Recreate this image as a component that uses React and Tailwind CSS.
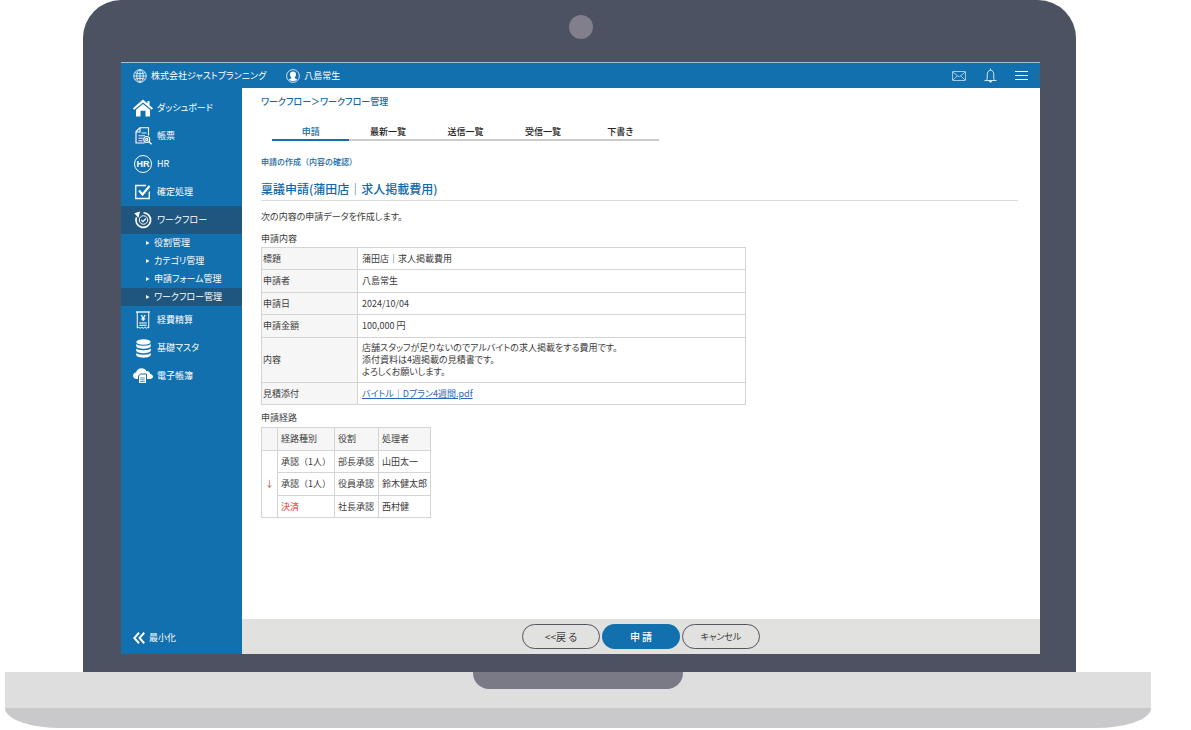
const GlobeIcon = () => (
    <svg viewBox="0 0 28 28" className="w-3.5 h-3.5" fill="none" stroke="currentColor" strokeWidth="1.6">
        <circle cx="14" cy="14" r="12.5" />
        <ellipse cx="14" cy="14" rx="6.5" ry="12.5" />
        <path d="M14 1.5v25M1.5 14h25M4 7.5c5 2.6 15 2.6 20 0M4 20.5c5-2.6 15-2.6 20 0" />
    </svg>
);

const UserIcon = () => (
    <svg viewBox="0 0 28 28" className="w-3.5 h-3.5">
        <circle cx="14" cy="14" r="12.8" fill="none" stroke="currentColor" strokeWidth="1.6" />
        <path fill="currentColor" d="M14 5c3.800 0 6 2.600 6 6 0 2.400-1 4.600-2.600 5.800v1.600l5 2.200c-2 2.600-4.800 4-8.400 4s-6.400-1.400-8.400-4l5-2.200v-1.600C9 15.600 8 13.400 8 11c0-3.400 2.200-6 6-6z" />
    </svg>
);

const MailIcon = () => (
    <svg viewBox="0 0 28 20" className="w-3.5 h-2.5" fill="none" stroke="currentColor" strokeWidth="1.5">
        <rect x="1" y="1" width="26" height="18" rx="1" />
        <path d="M1.500 2l10.500 8.500c1.200 1 2.800 1 4 0L26.500 2M2 18l8.500-8.500M26 18l-8.500-8.500" />
    </svg>
);

const BellIcon = () => (
    <svg viewBox="0 0 26 30" className="w-[13px] h-[15px]" fill="none" stroke="currentColor" strokeWidth="2">
        <path d="M1 25h24M4.500 25c1.700-2 2-4 2-7v-5c0-5 2.500-8.500 6.500-8.500s6.500 3.500 6.500 8.500v5c0 3 .3 5 2 7M13 1v3.500" />
        <path fill="currentColor" d="M11 26.500h4c0 1.200-.8 2-2 2s-2-.8-2-2z" />
    </svg>
);

const MenuIcon = () => (
    <svg viewBox="0 0 26 22" className="w-[13px] h-[11px]" stroke="currentColor" strokeWidth="2">
        <path d="M0 3h26M0 11h26M0 19h26" />
    </svg>
);

const HomeIcon = () => (
    <svg viewBox="0 0 40 36" className="w-5 h-[18px]" fill="currentColor">
        <path d="M20 1L0 18.500l2.500 3L20 7l17.500 14.500 2.500-3-7-6V4h-4v5z" />
        <path d="M6 21.500L20 10l14 11.500V35h-9V23.500H15V35H6z" />
    </svg>
);

const ReportIcon = () => (
    <svg viewBox="0 0 34 36" className="w-[17px] h-[18px]" fill="none" stroke="currentColor" strokeWidth="2.200">
        <path d="M19 32H2V9l7.500-7.500H27V17M2.500 10H10V2" />
        <path d="M13 12h10M7 17.500h13M7 22.500h9M7 27.500h8" strokeWidth="1.800" />
        <circle cx="23.500" cy="25" r="6" />
        <circle cx="23.500" cy="25" r="2.200" />
        <path d="M28 29.500l5 5" strokeWidth="2.800" />
    </svg>
);

const HrIcon = () => (
    <span className="w-[18px] h-[18px] flex items-center justify-center rounded-full border border-current text-[9px] font-bold font-['Liberation_Sans',sans-serif]">
        HR
    </span>
);

const CheckIcon = () => (
    <svg viewBox="0 0 32 32" className="w-4 h-4" fill="none" stroke="currentColor">
        <path d="M28.500 15v14h-27v-26H22" strokeWidth="2.600" />
        <path d="M8 13l7 8L29 4" strokeWidth="4.400" />
    </svg>
);

const FlowIcon = () => (
    <svg viewBox="0 0 36 36" className="w-[18px] h-[18px]" fill="none" stroke="currentColor">
        <path d="M19 3.500A14.700 14.700 0 1 1 5 12.500" strokeWidth="3.400" />
        <path d="M14 1L2.500 4.500l8.500 9z" fill="currentColor" stroke="none" transform="translate(-2 0)" />
        <circle cx="19" cy="18" r="8.500" strokeWidth="2" />
        <path d="M14.500 18l3.500 3.500 6-6.500" strokeWidth="2.400" />
    </svg>
);

const ReceiptIcon = () => (
    <svg viewBox="0 0 28 38" className="w-3.5 h-[19px]" fill="none" stroke="currentColor" strokeWidth="2">
        <path d="M0 2h28" strokeWidth="2.600" />
        <path d="M2.500 2v32l3-1.500 3 2 3-2 3 2 3-2 3 2 3-2 2 1.500V2" />
        <text x="14" y="19" textAnchor="middle" fontSize="17" fontWeight="700" fontFamily="Liberation Sans, sans-serif" fill="currentColor" stroke="none">¥</text>
        <path d="M6.500 24h15M6.500 28.500h15" />
    </svg>
);

const DatabaseIcon = () => (
    <svg viewBox="0 0 30 38" className="w-[15px] h-[19px]" fill="currentColor">
        <ellipse cx="15" cy="6" rx="14.500" ry="5.500" />
        <path d="M.5 9.500c2 5.300 27 5.300 29 0v5c-1 6.500-28 6.500-29 0z" />
        <path d="M.5 18.500c2 5.300 27 5.300 29 0v5c-1 6.500-28 6.500-29 0z" />
        <path d="M.5 27.500c2 5.300 27 5.300 29 0v4.500c-1 7-28 7-29 0z" />
    </svg>
);

const CloudIcon = () => (
    <svg viewBox="0 0 40 32" className="w-5 h-4">
        <path fill="currentColor" d="M8.500 22C3.500 22 0 19.500 0 15.500c0-3.500 2.500-6 6-6.500C7.500 4 11.500.5 17 .5c4.500 0 8 2 9.500 5.500 4.500 0 7.500 2.500 8 6 3.200.5 5.500 2.600 5.500 5.200 0 3-2.500 4.800-6.500 4.800z" />
        <path d="M11 16l4-4h12v19H11z" fill="currentColor" stroke="#1370ae" strokeWidth="2" />
        <path d="M14.500 20h9M14.500 23.500h9M14.500 27h9" stroke="#1370ae" strokeWidth="1.400" />
    </svg>
);

const CollapseIcon = () => (
    <svg viewBox="0 0 24 24" className="w-3 h-3" fill="none" stroke="currentColor" strokeWidth="3.800">
        <path d="M12 1.500L2.500 12l9.500 10.500M22.500 1.500L13 12l9.500 10.500" />
    </svg>
);

const menu = [
    { label: 'ダッシュボード', Icon: HomeIcon },
    { label: '帳票', Icon: ReportIcon },
    { label: 'HR', Icon: HrIcon },
    { label: '確定処理', Icon: CheckIcon },
    {
        label: 'ワークフロー',
        Icon: FlowIcon,
        active: true,
        children: ['役割管理', 'カテゴリ管理', '申請フォーム管理', 'ワークフロー管理'],
    },
    { label: '経費精算', Icon: ReceiptIcon },
    { label: '基礎マスタ', Icon: DatabaseIcon },
    { label: '電子帳簿', Icon: CloudIcon },
];

const tabs = ['申請', '最新一覧', '送信一覧', '受信一覧', '下書き'];

const details = [
    ['標題', '蒲田店｜求人掲載費用'],
    ['申請者', '八島常生'],
    ['申請日', '2024/10/04'],
    ['申請金額', '100,000 円'],
    ['内容', '店舗スタッフが足りないのでアルバイトの求人掲載をする費用です。\n添付資料は4週掲載の見積書です。\nよろしくお願いします。'],
];

const route = [
    ['承認（1人）', '部長承認', '山田太一'],
    ['承認（1人）', '役員承認', '鈴木健太郎'],
    ['決済', '社長承認', '西村健'],
];

const Header = () => (
    <header className="h-[26px] flex items-center px-3 bg-[#1370ae] border-t border-[#9fc3cf] text-white">
        <GlobeIcon />
        <span className="ml-1">株式会社ジャストプランニング</span>
        <span className="flex items-center gap-1 ml-5">
            <UserIcon />
            八島常生
        </span>
        <div className="flex items-center gap-[18px] ml-auto text-[#d3e5f0]">
            <button type="button" aria-label="メール"><MailIcon /></button>
            <button type="button" aria-label="通知"><BellIcon /></button>
            <button type="button" aria-label="メニュー" className="text-white"><MenuIcon /></button>
        </div>
    </header>
);

const Sidebar = () => (
    <aside className="w-[121px] shrink-0 flex flex-col bg-[#1370ae] text-white pt-1.5">
        <nav>
            {menu.map(({ label, Icon, active, children }) => (
                <div key={label}>
                    <a href="#" className={`h-7 flex items-center gap-1 pl-3 ${active ? 'bg-[#1e5680]' : ''}`}>
                        <span className="w-5 flex justify-center"><Icon /></span>
                        {label}
                    </a>
                    {children && children.map((child, i) => (
                        <a
                            key={child}
                            href="#"
                            className={`h-[18px] flex items-center gap-1 pl-6 ${i === children.length - 1 ? 'bg-[#1e5680]' : ''}`}
                        >
                            <svg viewBox="0 0 5 6" className="w-[5px] h-1.5" fill="currentColor"><path d="M1 1l3.500 2L1 5z" /></svg>
                            {child}
                        </a>
                    ))}
                </div>
            ))}
        </nav>
        <button type="button" className="h-8 flex items-center gap-1 pl-3 mt-auto">
            <CollapseIcon />
            最小化
        </button>
    </aside>
);

const DetailTable = () => (
    <table className="w-[485px] border-collapse text-left">
        <tbody>
            {details.map(([label, value]) => (
                <tr key={label} className="h-[22px] even:h-[23px]">
                    <th scope="row" className="w-24 px-px font-normal bg-[#f6f6f6] border border-[#d4d4d4]">{label}</th>
                    <td className="px-1 py-1 leading-3 whitespace-pre-line border border-[#d4d4d4]">{value}</td>
                </tr>
            ))}
            <tr className="h-[22px]">
                <th scope="row" className="px-px font-normal bg-[#f6f6f6] border border-[#d4d4d4]">見積添付</th>
                <td className="px-1 border border-[#d4d4d4]">
                    <a href="#" className="text-[#2b66b8] underline">バイトル｜Dプラン4週間.pdf</a>
                </td>
            </tr>
        </tbody>
    </table>
);

const RouteTable = () => (
    <table className="w-[170px] table-fixed border-collapse text-left whitespace-nowrap [font-feature-settings:normal]">
        <thead>
            <tr className="h-[23px] bg-[#f6f6f6]">
                <td className="w-4 border border-[#d4d4d4]"></td>
                <th scope="col" className="w-[57px] px-[3px] font-normal border border-[#d4d4d4]">経路種別</th>
                <th scope="col" className="w-11 px-[3px] font-normal border border-[#d4d4d4]">役割</th>
                <th scope="col" className="px-[3px] font-normal border border-[#d4d4d4]">処理者</th>
            </tr>
        </thead>
        <tbody>
            {route.map(([type, role, person], i) => (
                <tr key={role} className="h-[22px] even:h-[23px]">
                    {i === 0 && <td rowSpan={3} className="text-center text-[#c8502d] border border-[#d4d4d4]">↓</td>}
                    <td className={`px-[3px] border border-[#d4d4d4] ${type === '決済' ? 'text-[#f03030]' : ''}`}>{type}</td>
                    <td className="px-[3px] border border-[#d4d4d4]">{role}</td>
                    <td className="px-[3px] border border-[#d4d4d4]">{person}</td>
                </tr>
            ))}
        </tbody>
    </table>
);

const Content = () => (
    <main className="flex-1 pl-[19px] pr-[22px] pt-1.5">
        <p className="leading-4 font-medium text-[#1468a6]">ワークフロー＞ワークフロー管理</p>
        <nav className="w-[387px] grid grid-cols-5 mt-3 ml-[11px]">
            {tabs.map((tab, i) => (
                <a
                    key={tab}
                    href="#"
                    className={`h-[19px] leading-5 text-center font-medium border-b-2 ${i === 0 ? 'text-[#1468a6] border-[#1370ae]' : 'text-[#222] border-[#cbcbcb]'}`}
                >
                    {tab}
                </a>
            ))}
        </nav>
        <p className="mt-[13px] text-[8px] leading-4 font-medium text-[#1468a6] [font-feature-settings:normal]">申請の作成（内容の確認）</p>
        <h1 className="mt-2 text-[12px] leading-[22px] font-medium text-[#1468a6] border-b border-[#dcdcdc]">
            稟議申請(蒲田店｜求人掲載費用)
        </h1>
        <p className="mt-2 leading-4">次の内容の申請データを作成します。</p>
        <h2 className="mt-1.5 leading-4">申請内容</h2>
        <DetailTable />
        <h2 className="mt-1 leading-[18px]">申請経路</h2>
        <RouteTable />
    </main>
);

const Actions = () => (
    <footer className="h-[35px] flex items-center justify-center gap-0.5 bg-[#e1e1df]">
        <button type="button" className="w-[78px] h-[25px] rounded-full border border-[#55555c] text-[10px]">&lt;&lt;戻 る</button>
        <button type="button" className="w-[78px] h-[25px] rounded-full bg-[#1370ae] text-white text-[10px] font-medium">申 請</button>
        <button type="button" className="w-[78px] h-[25px] rounded-full border border-[#55555c]">キャンセル</button>
    </footer>
);

const App = () => {
    return (
        <div className="bg-white pl-[5px] pr-10 text-[9px] leading-3 text-[#3c3c3c] font-['Noto_Sans_CJK_JP',sans-serif] [font-feature-settings:'palt']">
            <div className="ml-[78px] mr-[75px] pl-[38px] pr-9 pb-[18px] rounded-t-[38px] bg-[#4c5261]">
                <div className="h-[62px] pt-[15px]">
                    <div className="w-6 h-6 mx-auto rounded-full bg-[#807f8b]" />
                </div>
                <div className="min-h-[592px] flex flex-col bg-white">
                    <Header />
                    <div className="flex-1 flex">
                        <Sidebar />
                        <div className="flex-1 flex flex-col">
                            <Content />
                            <Actions />
                        </div>
                    </div>
                </div>
            </div>
            <div className="h-9 bg-[#dedede]">
                <div className="w-[210px] h-[17px] mx-auto rounded-b-[16px] bg-[#797a86]" />
            </div>
            <div className="h-5 bg-[#c9c9cb] rounded-b-[56px_20px]" />
        </div>
    );
};

export default App;
